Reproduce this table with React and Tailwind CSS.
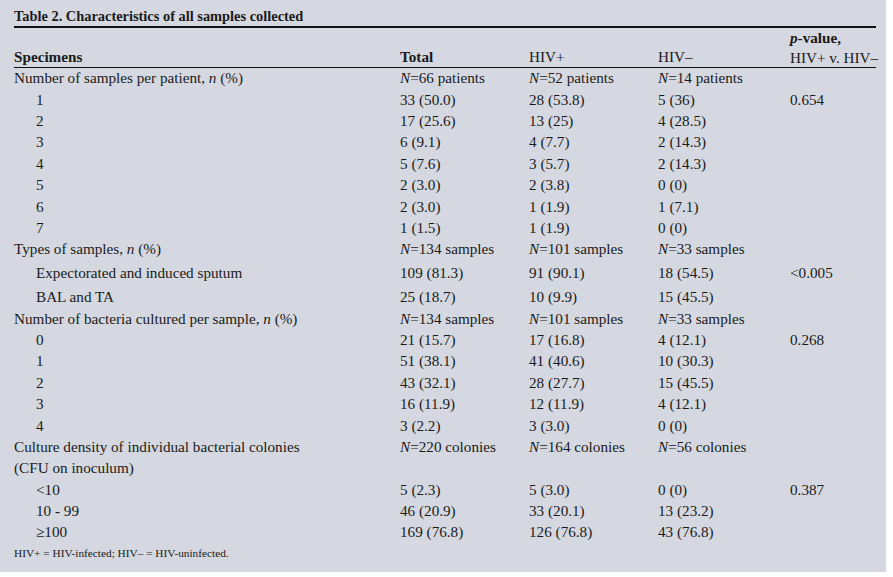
const rows = [
  { label: <>Number of samples per patient, <i>n</i> (%)</>, total: <><i>N</i>=66 patients</>, pos: <><i>N</i>=52 patients</>, neg: <><i>N</i>=14 patients</>, h: 'h-[21.4px]' },
  { label: '1', sub: true, total: '33 (50.0)', pos: '28 (53.8)', neg: '5 (36)', p: '0.654', h: 'h-[21.4px]' },
  { label: '2', sub: true, total: '17 (25.6)', pos: '13 (25)', neg: '4 (28.5)', h: 'h-[21.4px]' },
  { label: '3', sub: true, total: '6 (9.1)', pos: '4 (7.7)', neg: '2 (14.3)', h: 'h-[21.4px]' },
  { label: '4', sub: true, total: '5 (7.6)', pos: '3 (5.7)', neg: '2 (14.3)', h: 'h-[21.4px]' },
  { label: '5', sub: true, total: '2 (3.0)', pos: '2 (3.8)', neg: '0 (0)', h: 'h-[21.4px]' },
  { label: '6', sub: true, total: '2 (3.0)', pos: '1 (1.9)', neg: '1 (7.1)', h: 'h-[21.4px]' },
  { label: '7', sub: true, total: '1 (1.5)', pos: '1 (1.9)', neg: '0 (0)', h: 'h-[21.4px]' },
  { label: <>Types of samples, <i>n</i> (%)</>, total: <><i>N</i>=134 samples</>, pos: <><i>N</i>=101 samples</>, neg: <><i>N</i>=33 samples</>, h: 'h-[21.4px]' },
  { label: 'Expectorated and induced sputum', sub: true, total: '109 (81.3)', pos: '91 (90.1)', neg: '18 (54.5)', p: '<0.005', h: 'h-[26px]' },
  { label: 'BAL and TA', sub: true, total: '25 (18.7)', pos: '10 (9.9)', neg: '15 (45.5)', h: 'h-[22px]' },
  { label: <>Number of bacteria cultured per sample, <i>n</i> (%)</>, total: <><i>N</i>=134 samples</>, pos: <><i>N</i>=101 samples</>, neg: <><i>N</i>=33 samples</>, h: 'h-[21.4px]' },
  { label: '0', sub: true, total: '21 (15.7)', pos: '17 (16.8)', neg: '4 (12.1)', p: '0.268', h: 'h-[21.4px]' },
  { label: '1', sub: true, total: '51 (38.1)', pos: '41 (40.6)', neg: '10 (30.3)', h: 'h-[21.4px]' },
  { label: '2', sub: true, total: '43 (32.1)', pos: '28 (27.7)', neg: '15 (45.5)', h: 'h-[21.4px]' },
  { label: '3', sub: true, total: '16 (11.9)', pos: '12 (11.9)', neg: '4 (12.1)', h: 'h-[21.4px]' },
  { label: '4', sub: true, total: '3 (2.2)', pos: '3 (3.0)', neg: '0 (0)', h: 'h-[21.2px]' },
  { label: 'Culture density of individual bacterial colonies', total: <><i>N</i>=220 colonies</>, pos: <><i>N</i>=164 colonies</>, neg: <><i>N</i>=56 colonies</>, h: 'h-[21.2px]' },
  { label: '(CFU on inoculum)', total: '', pos: '', neg: '', h: 'h-[21.6px]' },
  { label: '<10', sub: true, total: '5 (2.3)', pos: '5 (3.0)', neg: '0 (0)', p: '0.387', h: 'h-[21.4px]' },
  { label: '10 - 99', sub: true, total: '46 (20.9)', pos: '33 (20.1)', neg: '13 (23.2)', h: 'h-[21.4px]' },
  { label: '≥100', sub: true, total: '169 (76.8)', pos: '126 (76.8)', neg: '43 (76.8)', h: 'h-[21.4px]' },
];

export default function App() {
  return (
    <div className="w-[893px] h-[577px] bg-white">
      <div className="w-[886px] h-[572px] bg-[#d5d8e0] pl-[14px] pr-[10px] pt-[7px] text-[#1a1a1a] font-['Liberation_Serif',serif]">
        <div className="text-[14.4px] font-bold leading-[18px] border-b-2 border-[#111] pb-[1px]">
          Table 2. Characteristics of all samples collected
        </div>
        <table className="table-fixed border-collapse w-[862px] text-[15.2px] leading-[18px]">
          <colgroup>
            <col className="w-[386px]" />
            <col className="w-[129px]" />
            <col className="w-[129px]" />
            <col className="w-[132px]" />
            <col className="w-[86px]" />
          </colgroup>
          <thead>
            <tr className="border-b border-[#111] h-[39.5px]">
              <th className="text-left font-bold align-bottom pb-[1px]">Specimens</th>
              <th className="text-left font-bold align-bottom pb-[1px]">Total</th>
              <th className="text-left font-normal align-bottom pb-[1px]">HIV+</th>
              <th className="text-left font-normal align-bottom pb-[1px]">HIV–</th>
              <th className="text-left font-normal align-bottom leading-[19.5px] whitespace-nowrap">
                <span className="font-bold"><i>p</i>-value,</span><br />HIV+ v. HIV–
              </th>
            </tr>
          </thead>
          <tbody>
            {rows.map((r, i) => (
              <tr key={i} className={r.h}>
                <td className={r.sub ? 'pl-[22px] p-0 whitespace-nowrap' : 'p-0 whitespace-nowrap'}>{r.label}</td>
                <td className="p-0 whitespace-nowrap">{r.total}</td>
                <td className="p-0 whitespace-nowrap">{r.pos}</td>
                <td className="p-0 whitespace-nowrap">{r.neg}</td>
                <td className="p-0 whitespace-nowrap">{r.p}</td>
              </tr>
            ))}
          </tbody>
        </table>
        <div className="text-[11.3px] leading-[14px] mt-[3px]">HIV+ = HIV-infected; HIV– = HIV-uninfected.</div>
      </div>
    </div>
  );
}
